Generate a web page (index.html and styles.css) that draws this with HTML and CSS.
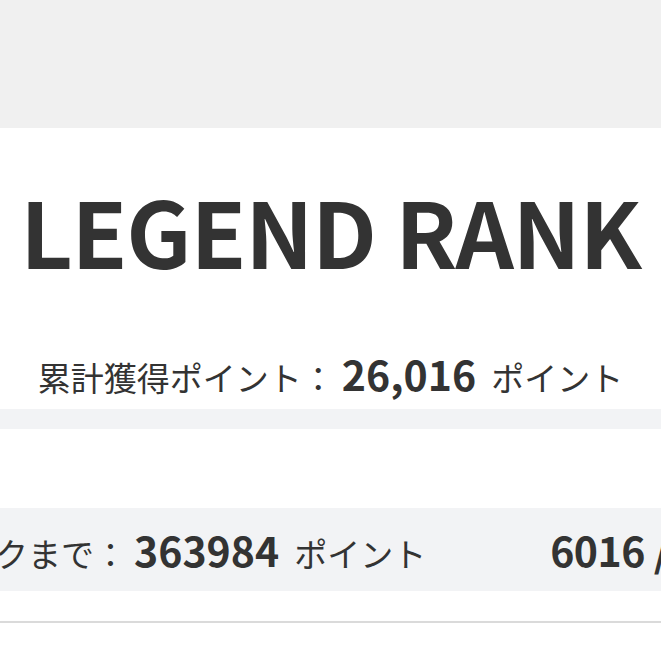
FILE: index.html
```html
<!DOCTYPE html>
<html lang="ja">
<head>
  <meta charset="UTF-8">
  <meta name="viewport" content="width=device-width, initial-scale=1.0">
  <title>ランク</title>
  <link rel="stylesheet" href="styles.css">
</head>
<body>
  <div class="top-bar"></div>

  <section class="rank-card">
    <h1 class="rank-name">LEGEND RANK</h1>
    <p class="rank-total">累計獲得ポイント：<span class="num">26,016</span><span class="unit">ポイント</span></p>
  </section>

  <div class="divider"></div>

  <section class="next-rank">
    <div class="next-box">
      <p class="next-left">クまで：<span class="num">363984</span><span class="unit">ポイント</span></p>
      <p class="next-right">6016 /</p>
    </div>
  </section>

  <div class="bottom-line"></div>
</body>
</html>
```

FILE: styles.css
```css
:root {
  --text-color: #333;
  --top-gray: #f0f0f0;
  --panel-gray: #f2f3f5;
}

body {
  margin: 0;
  font-family: "Noto Sans CJK JP", "Noto Sans", sans-serif;
  color: var(--text-color);
  background-color: white;
  overflow: hidden;
}

p, h1 {
  margin: 0;
}

.top-bar {
  height: 128px;
  background-color: var(--top-gray);
}

.rank-card {
  padding: 56px 0 15px;
  text-align: center;
}

.rank-name {
  font-size: 91px;
  font-weight: bold;
  line-height: 1;
  letter-spacing: -1.2px;
}

.rank-total {
  margin-top: 78px;
  font-size: 33px;
  line-height: 1;
  white-space: nowrap;
}

.num {
  font-size: 41px;
  font-weight: bold;
  margin-left: 7px;
}

.unit {
  margin-left: 15px;
}

.divider {
  height: 20px;
  background-color: var(--panel-gray);
}

.next-rank {
  padding: 79px 0 30px;
}

.next-box {
  display: flex;
  align-items: center;
  height: 83px;
  background-color: var(--panel-gray);
  white-space: nowrap;
  overflow: hidden;
}

.next-left {
  margin-left: -5px;
  font-size: 33px;
  line-height: 1;
}

.next-right {
  margin-left: 124px;
  font-size: 41px;
  font-weight: bold;
  line-height: 1;
  letter-spacing: -0.5px;
}

.bottom-line {
  height: 2px;
  background-color: #dadada;
  box-shadow: 0 1px 2px rgba(0,0,0,0.08);
}
```
